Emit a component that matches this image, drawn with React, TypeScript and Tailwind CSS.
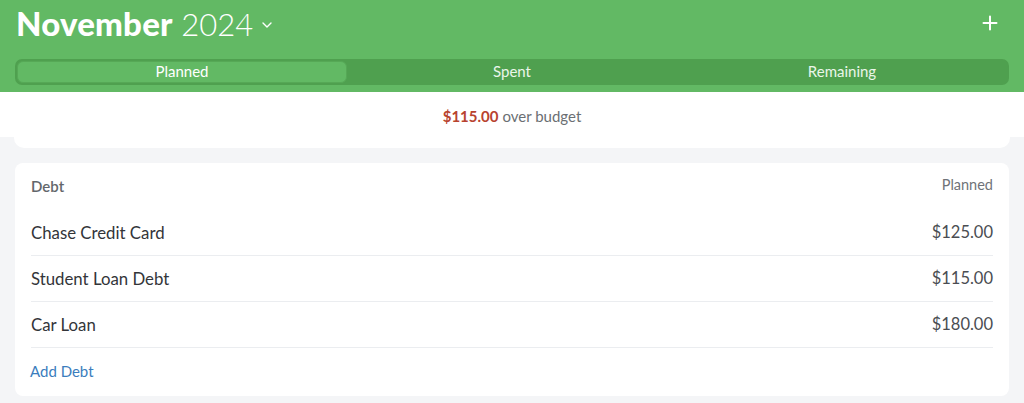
import React from 'react';

const rows = [
  { name: 'Chase Credit Card', amount: '$125.00' },
  { name: 'Student Loan Debt', amount: '$115.00' },
  { name: 'Car Loan', amount: '$180.00' },
];

const tabs = ['Planned', 'Spent', 'Remaining'];

export default function App() {
  return (
    <div
      className="w-[1024px] h-[403px] overflow-hidden bg-[#f4f5f7]"
      style={{ fontFamily: 'Lato, "Open Sans", sans-serif' }}
    >
      {/* Header */}
      <div className="bg-[#62b964] h-[92px] px-[15px] pt-[3px]">
        <div className="flex items-center justify-between h-[40px]">
          <div className="flex items-center pl-px">
            <h1 className="text-[33px] leading-none text-white tracking-[0.2px]">
              <span className="font-black">November</span>{' '}
              <span className="font-light text-[31px] tracking-normal">2024</span>
            </h1>
            <svg
              className="ml-[8px] mt-[4px] w-[12px] h-[12px] text-white"
              viewBox="0 0 12 12"
              fill="none"
              stroke="currentColor"
              strokeWidth="1.4"
              strokeLinecap="round"
              strokeLinejoin="round"
            >
              <path d="M2 4l4 4 4-4" />
            </svg>
          </div>
          <svg
            className="w-[16px] h-[16px] mr-[11px] text-white"
            viewBox="0 0 16 16"
            fill="none"
            stroke="currentColor"
            strokeWidth="2"
            strokeLinecap="round"
          >
            <path d="M8 1.5v13M1.5 8h13" />
          </svg>
        </div>

        {/* Segmented control */}
        <div className="mt-[16px] grid grid-cols-3 h-[26px] rounded-[7px] bg-[#4fa04f] p-[2px]">
          {tabs.map((t, i) => (
            <div
              key={t}
              className={
                i === 0
                  ? 'flex items-center justify-center rounded-[6px] bg-[#62b964] border border-[#56a856] text-[15px] leading-none pb-[2px] text-white'
                  : 'flex items-center justify-center text-[15px] leading-none pb-[2px] text-[#eaf6ea]'
              }
            >
              {t}
            </div>
          ))}
        </div>
      </div>

      {/* Summary */}
      <div className="bg-white h-[45px]" />
      <div className="mx-[14px] -mt-[45px] bg-white rounded-b-[10px] h-[56px] pb-[7px] flex items-center justify-center text-[15px]">
        <span className="font-bold text-[#b8432f]">$115.00</span>
        <span className="ml-[4px] text-[#6b6f73]">over budget</span>
      </div>

      {/* Debt card */}
      <div className="mx-[15px] mt-[15px] bg-white rounded-[8px] px-[16px] pb-[7px]">
        <div className="flex items-start justify-between pt-[12px] h-[47px]">
          <span className="text-[15px] font-semibold text-[#63676b]">Debt</span>
          <span className="-mt-[1px] text-[14.5px] text-[#6f7378]">Planned</span>
        </div>
        {rows.map((r) => (
          <div
            key={r.name}
            className="flex items-center justify-between h-[46px] border-b border-[#ebedf0] text-[#333539]"
          >
            <span className="text-[16.8px]">{r.name}</span>
            <span className="text-[16.5px] text-[#4a4d52]">{r.amount}</span>
          </div>
        ))}
        <div className="h-[41px] pt-[5px] flex items-center text-[15px] text-[#3b7dbd] -ml-px">
          Add Debt
        </div>
      </div>
    </div>
  );
}
